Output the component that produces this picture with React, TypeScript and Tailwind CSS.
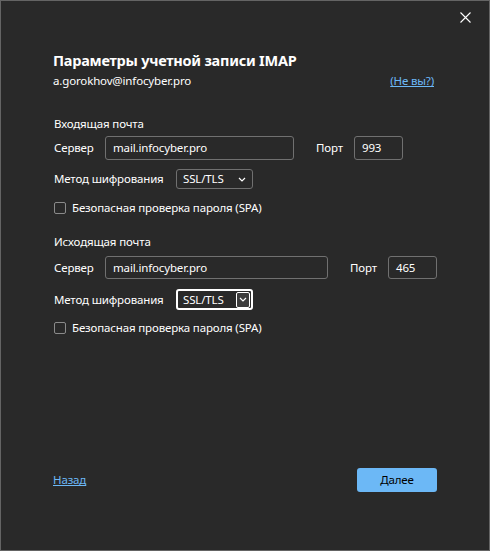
import React from "react";

const font = { fontFamily: '"Noto Sans", "Open Sans", sans-serif' };

function Field({ value, width }: { value: string; width: string }) {
  return (
    <div
      className={`${width} h-full rounded-[3px] border border-[#707070] bg-[#292929] pl-[7px] flex items-center text-white`}
    >
      {value}
    </div>
  );
}

function Select({ focused }: { focused?: boolean }) {
  return (
    <div
      className={
        focused
          ? "w-[77px] h-full rounded-[3px] border-2 border-white flex items-center pl-[5px] pr-[1px] text-white"
          : "w-[77px] h-full rounded-[3px] border border-[#707070] flex items-center pl-[6px] pr-[6px] text-white"
      }
    >
      <span className="flex-1">SSL/TLS</span>
      {focused ? (
        <span className="w-[14px] h-[16px] rounded-[2px] border border-white bg-[#3c3c3c] flex items-center justify-center">
          <Chevron />
        </span>
      ) : (
        <Chevron />
      )}
    </div>
  );
}

function Chevron() {
  return (
    <svg width="8" height="5" viewBox="0 0 8 5" fill="none">
      <path d="M1 1l3 3 3-3" stroke="white" strokeWidth="1.2" />
    </svg>
  );
}

function Checkbox({ label }: { label: string }) {
  return (
    <div className="flex items-center h-full">
      <span className="w-[12px] h-[12px] rounded-[2px] border border-[#8a8a8a] ml-[1px]" />
      <span className="ml-[6px] text-white">{label}</span>
    </div>
  );
}

export default function App() {
  return (
    <div
      style={font}
      className="relative w-[490px] h-[551px] bg-[#292929] border border-[#646464] text-white text-[11.5px] tracking-[-0.15px] overflow-hidden"
    >
      <button className="absolute right-[18px] top-[10px] w-[12px] h-[12px] flex items-center justify-center">
        <svg width="11" height="11" viewBox="0 0 11 11">
          <path d="M0.5 0.5l10 10M10.5 0.5l-10 10" stroke="white" strokeWidth="1.1" />
        </svg>
      </button>

      <div className="flex flex-col pl-[52px] pt-[50px] whitespace-nowrap">
        <div className="h-[20px] flex items-center text-[14.5px] tracking-[-0.25px] font-bold">
          Параметры учетной записи IMAP
        </div>
        <div className="mt-px h-[18px] w-[381px] flex items-center justify-between">
          <span>a.gorokhov@infocyber.pro</span>
          <span className="text-[#6cb8f6] underline">(Не вы?)</span>
        </div>

        <div className="mt-[25px] h-[18px] flex items-center pl-px">
          Входящая почта
        </div>
        <div className="mt-[3px] h-[24px] flex items-center pl-px">
          <span className="w-[51px]">Сервер</span>
          <Field value="mail.infocyber.pro" width="w-[189px]" />
          <span className="ml-[22px] w-[38px]">Порт</span>
          <Field value="993" width="w-[49px]" />
        </div>
        <div className="mt-[9px] h-[20px] flex items-center pl-px">
          <span className="w-[122px]">Метод шифрования</span>
          <Select />
        </div>
        <div className="mt-[12px] h-[14px]">
          <Checkbox label="Безопасная проверка пароля (SPA)" />
        </div>

        <div className="mt-[18px] h-[18px] flex items-center pl-px">
          Исходящая почта
        </div>
        <div className="mt-[5px] h-[23px] flex items-center pl-px">
          <span className="w-[51px]">Сервер</span>
          <Field value="mail.infocyber.pro" width="w-[223px]" />
          <span className="ml-[22px] w-[38px]">Порт</span>
          <Field value="465" width="w-[49px]" />
        </div>
        <div className="mt-[10px] h-[21px] flex items-center pl-px">
          <span className="w-[122px]">Метод шифрования</span>
          <Select focused />
        </div>
        <div className="mt-[11px] h-[14px]">
          <Checkbox label="Безопасная проверка пароля (SPA)" />
        </div>

        <div className="mt-[133px] w-[384px] h-[24px] flex items-center justify-between">
          <span className="text-[#6cb8f6] underline">Назад</span>
          <button className="w-[80px] h-[24px] rounded-[3px] bg-[#6cb8f6] text-black">
            Далее
          </button>
        </div>
      </div>
    </div>
  );
}
